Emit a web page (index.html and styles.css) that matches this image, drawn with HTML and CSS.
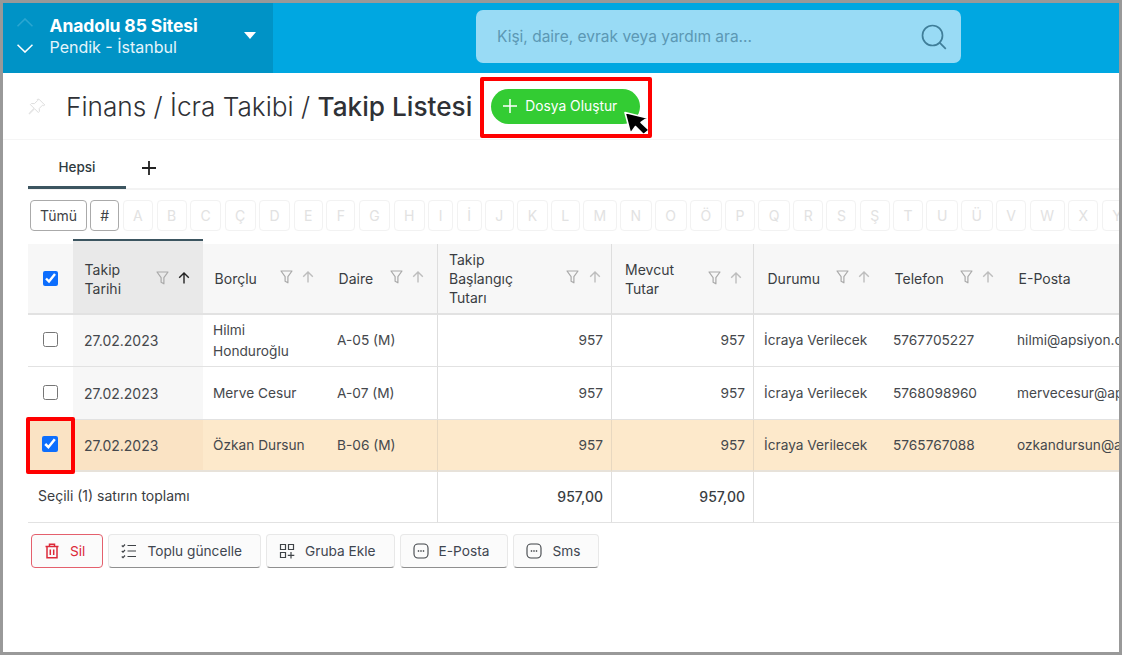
FILE: index.html
```html
<!DOCTYPE html>
<html lang="tr">
<head>
<meta charset="utf-8">
<title>Takip Listesi</title>
<link rel="stylesheet" href="styles.css">
</head>
<body>
<svg class="defs" aria-hidden="true">
  <symbol id="i-filter" viewBox="0 0 13 14"><path d="M1 1h11L7.900 6.600v6.200L5.100 11.200V6.600z" fill="none" stroke="currentColor" stroke-width="1.200" stroke-linejoin="round"/></symbol>
  <symbol id="i-arrow" viewBox="0 0 12 12"><path d="M6 11.500V1M1.200 5.800 6 1l4.800 4.800" fill="none" stroke="currentColor" stroke-width="1.400"/></symbol>
  <symbol id="i-chat" viewBox="0 0 16 16"><rect x="1" y="1" width="14" height="14" rx="4" fill="none" stroke="currentColor" stroke-width="1.100"/><path d="M4.800 8h1.400M7.300 8h1.400M9.800 8h1.400" stroke="currentColor" stroke-width="1.500"/></symbol>
</svg>
<div class="frame">
  <header class="topbar">
    <div class="site">
      <div class="site-arrows">
        <svg class="chev chev-off" viewBox="0 0 16 9"><path d="M.5 8.300L8 1l7.500 7.300" fill="none" stroke="currentColor" stroke-width="1.600"/></svg>
        <svg class="chev" viewBox="0 0 16 9"><path d="M.5.700L8 8l7.500-7.300" fill="none" stroke="currentColor" stroke-width="1.600"/></svg>
      </div>
      <div class="site-text">
        <div class="site-name">Anadolu 85 Sitesi</div>
        <div class="site-city">Pendik - İstanbul</div>
      </div>
      <span class="caret"></span>
    </div>
    <div class="search">
      <span class="search-text">Kişi, daire, evrak veya yardım ara...</span>
      <svg class="search-icon" viewBox="0 0 26 26"><circle cx="11.500" cy="11.500" r="10" fill="none" stroke="currentColor" stroke-width="1.700"/><path d="M18.600 18.600l6.200 6.200" stroke="currentColor" stroke-width="1.700"/></svg>
    </div>
  </header>

  <main class="content">
    <div class="titlebar">
      <svg class="pin" viewBox="0 0 18 18"><path d="M11 1.200l5.800 5.800-1.300.6-1-.4-3.200 3.200.1 3-1.100 1.100-3.700-3.700-4.900 4.900-.6.1.1-.6 4.900-4.900L2.400 6.600l1.100-1.100 3 .1 3.200-3.200-.4-1z" fill="none" stroke="currentColor" stroke-width="1"/></svg>
      <h1 class="title">Finans / İcra Takibi / <strong>Takip Listesi</strong></h1>
      <div class="create-wrap">
        <button class="create" type="button">
          <svg class="plus" viewBox="0 0 14 14"><path d="M7 0v14M0 7h14" stroke="currentColor" stroke-width="1.500"/></svg>
          Dosya Oluştur
        </button>
        <svg class="cursor" viewBox="0 0 28 25"><path d="M2 1.500l5.500 21 5-7 8 8 5.500-4.500-8-7.500 6.500-4.500z" fill="#000" stroke="#fff" stroke-width="1.600" stroke-linejoin="round"/></svg>
        <span class="redbox redbox-create"></span>
      </div>
    </div>

    <div class="tabs">
      <div class="tab">Hepsi</div>
      <svg class="tab-add" viewBox="0 0 14 14"><path d="M7 0v14M0 7h14" stroke="currentColor" stroke-width="1.800"/></svg>
    </div>

    <div class="letters">
      <button class="letter letter-on letter-all" type="button">Tümü</button>
      <button class="letter letter-on" type="button">#</button>
      <span class="letter">A</span><span class="letter">B</span><span class="letter">C</span><span class="letter">Ç</span><span class="letter">D</span><span class="letter">E</span><span class="letter">F</span><span class="letter">G</span><span class="letter">H</span><span class="letter">I</span><span class="letter">İ</span><span class="letter">J</span><span class="letter">K</span><span class="letter">L</span><span class="letter">M</span><span class="letter">N</span><span class="letter">O</span><span class="letter">Ö</span><span class="letter">P</span><span class="letter">Q</span><span class="letter">R</span><span class="letter">S</span><span class="letter">Ş</span><span class="letter">T</span><span class="letter">U</span><span class="letter">Ü</span><span class="letter">V</span><span class="letter">W</span><span class="letter">X</span><span class="letter">Y</span>
    </div>

    <table class="grid">
      <colgroup>
        <col class="c-check"><col class="c-date"><col class="c-name"><col class="c-flat"><col class="c-start"><col class="c-now"><col class="c-state"><col class="c-phone"><col class="c-mail">
      </colgroup>
      <thead>
        <tr>
          <th class="cell-check"><input class="check" type="checkbox" checked aria-label="Tümünü seç"></th>
          <th class="sorted"><div class="th-in"><span class="th-label">Takip<br>Tarihi</span><span class="th-icons"><svg class="ic-filter"><use href="#i-filter"/></svg><svg class="ic-arrow ic-arrow-on"><use href="#i-arrow"/></svg></span></div></th>
          <th><div class="th-in"><span class="th-label">Borçlu</span><span class="th-icons"><svg class="ic-filter"><use href="#i-filter"/></svg><svg class="ic-arrow"><use href="#i-arrow"/></svg></span></div></th>
          <th><div class="th-in"><span class="th-label">Daire</span><span class="th-icons"><svg class="ic-filter"><use href="#i-filter"/></svg><svg class="ic-arrow"><use href="#i-arrow"/></svg></span></div></th>
          <th class="sep"><div class="th-in th-start"><span class="th-label">Takip<br>Başlangıç<br>Tutarı</span><span class="th-icons"><svg class="ic-filter"><use href="#i-filter"/></svg><svg class="ic-arrow"><use href="#i-arrow"/></svg></span></div></th>
          <th class="sep"><div class="th-in th-now"><span class="th-label">Mevcut<br>Tutar</span><span class="th-icons"><svg class="ic-filter"><use href="#i-filter"/></svg><svg class="ic-arrow"><use href="#i-arrow"/></svg></span></div></th>
          <th class="sep"><div class="th-in th-wide"><span class="th-label">Durumu</span><span class="th-icons"><svg class="ic-filter"><use href="#i-filter"/></svg><svg class="ic-arrow"><use href="#i-arrow"/></svg></span></div></th>
          <th><div class="th-in"><span class="th-label">Telefon</span><span class="th-icons"><svg class="ic-filter"><use href="#i-filter"/></svg><svg class="ic-arrow"><use href="#i-arrow"/></svg></span></div></th>
          <th><div class="th-in"><span class="th-label">E-Posta</span></div></th>
        </tr>
      </thead>
      <tbody>
        <tr class="row">
          <td class="cell-check"><input class="check" type="checkbox" aria-label="Seç"></td>
          <td class="date">27.02.2023</td><td>Hilmi Honduroğlu</td><td>A-05 (M)</td><td class="sep num">957</td><td class="sep num">957</td><td class="sep">İcraya Verilecek</td><td>5767705227</td><td class="mail">hilmi@apsiyon.com</td>
        </tr>
        <tr class="row row-tall">
          <td class="cell-check"><input class="check" type="checkbox" aria-label="Seç"></td>
          <td class="date">27.02.2023</td><td>Merve Cesur</td><td>A-07 (M)</td><td class="sep num">957</td><td class="sep num">957</td><td class="sep">İcraya Verilecek</td><td>5768098960</td><td class="mail">mervecesur@apsiyon.com</td>
        </tr>
        <tr class="row row-on">
          <td class="cell-check cell-mark"><input class="check" type="checkbox" checked aria-label="Seç"><span class="redbox redbox-check"></span></td>
          <td class="date">27.02.2023</td><td>Özkan Dursun</td><td>B-06 (M)</td><td class="sep num">957</td><td class="sep num">957</td><td class="sep">İcraya Verilecek</td><td>5765767088</td><td class="mail">ozkandursun@apsiyon.com</td>
        </tr>
      </tbody>
      <tfoot>
        <tr>
          <td colspan="4" class="sum-label">Seçili (1) satırın toplamı</td>
          <td class="sep num sum">957,00</td><td class="sep num sum">957,00</td><td colspan="3" class="sep"></td>
        </tr>
      </tfoot>
    </table>

    <div class="actions">
      <button class="act act-del" type="button">
        <svg class="act-ic" viewBox="0 0 16 16"><path d="M1.500 3.500h13M5.500 3.300V1.300h5v2M3 3.500v11.200h10V3.500M6.300 6.500v5.500M9.700 6.500v5.500" fill="none" stroke="currentColor" stroke-width="1.500"/></svg>
        Sil
      </button>
      <button class="act" type="button">
        <svg class="act-ic" viewBox="0 0 16 16"><path d="M6.500 2.500H15M6.500 8H15M6.500 13.500H15M.8 2.500l1.200 1.200L4 1.500M.8 8l1.200 1.200L4 7M.8 13.500l1.200 1.200L4 12.500" fill="none" stroke="currentColor" stroke-width="1.200"/></svg>
        Toplu güncelle
      </button>
      <button class="act" type="button">
        <svg class="act-ic" viewBox="0 0 16 16"><path d="M1.500 1.500h5v5h-5zM9.500 1.500h5v5h-5zM1.500 9.500h5v5h-5zM12 9v6.500M8.800 12.300h6.500" fill="none" stroke="currentColor" stroke-width="1.200"/></svg>
        Gruba Ekle
      </button>
      <button class="act" type="button"><svg class="act-ic"><use href="#i-chat"/></svg>E-Posta</button>
      <button class="act" type="button"><svg class="act-ic"><use href="#i-chat"/></svg>Sms</button>
    </div>
  </main>
</div>
</body>
</html>
```

FILE: styles.css
```css
* { box-sizing: border-box; }
html, body { margin: 0; height: 100%; }
body {
  font-family: Inter, "Liberation Sans", sans-serif;
  font-size: 14px;
  color: #3f4347;
  background: #fff;
  overflow: hidden;
}
button { font-family: inherit; }
.defs { display: none; }

.frame {
  width: 1122px;
  height: 655px;
  border: 3px solid #999;
  display: flex;
  flex-direction: column;
  overflow: hidden;
}

/* top bar */
.topbar {
  height: 70px;
  flex: none;
  background: #00a7e1;
  display: flex;
  align-items: stretch;
}
.site {
  width: 270px;
  background: #0093c6;
  color: #fff;
  display: flex;
  align-items: center;
  padding-left: 14px;
}
.site-arrows {
  width: 32.5px;
  display: flex;
  flex-direction: column;
  gap: 17px;
  margin-top: -6px;
}
.chev { width: 16px; height: 9px; display: block; color: #fff; }
.chev-off { color: #2ba6d1; }
.site-text { flex: 1; margin-top: -4px; }
.site-name { font-size: 17.5px; font-weight: 700; line-height: 22px; letter-spacing: -0.1px; }
.site-city { font-size: 16px; font-weight: 400; line-height: 20px; color: #e5f5fb; }
.caret {
  width: 0;
  height: 0;
  border-left: 6.5px solid transparent;
  border-right: 6.5px solid transparent;
  border-top: 7px solid #fff;
  margin: 0 17.5px 6px 0;
}
.search {
  width: 485px;
  height: 53px;
  margin: 7px 0 0 203px;
  background: #99dbf5;
  border-radius: 7px;
  display: flex;
  align-items: center;
  justify-content: space-between;
  padding: 0 14px 0 21px;
}
.search-text { font-size: 15.5px; color: #5c98b4; }
.search-icon { width: 26px; height: 26px; color: #3f7e99; }

/* content */
.content { flex: 1; min-height: 0; overflow: hidden; }
.titlebar {
  height: 67px;
  padding-left: 25px;
  border-bottom: 1px solid #f5f5f5;
  display: flex;
  align-items: center;
}
.pin { width: 18px; height: 18px; margin-top: 2px; color: #dedede; flex: none; }
.title {
  margin: 2px 0 0 20px;
  font-size: 26.2px;
  font-weight: 300;
  line-height: 32px;
  color: #2f3136;
  white-space: nowrap;
}
.title strong { font-weight: 500; }
.create-wrap { position: relative; margin-left: 19px; }
.create {
  width: 149px;
  height: 35px;
  border: 0;
  border-radius: 18px;
  background: #33cc33;
  color: #fff;
  font-size: 13.8px;
  font-weight: 400;
  display: flex;
  align-items: center;
  padding: 0 0 0 12px;
  gap: 8px;
}
.plus { width: 14px; height: 14px; flex: none; }
.cursor { position: absolute; left: 132px; top: 22px; width: 28px; height: 25px; }
.redbox { position: absolute; border: 4px solid #f00; border-radius: 2px; pointer-events: none; }
.redbox-create { left: -11px; top: -12px; width: 172px; height: 61px; }

.tabs {
  height: 50px;
  margin-left: 25px;
  border-bottom: 2px solid #f3f3f3;
  display: flex;
  align-items: stretch;
}
.tab {
  width: 98px;
  height: 49px;
  padding-top: 18px;
  text-align: center;
  font-size: 13.5px;
  font-weight: 500;
  line-height: 18px;
  color: #2f3a40;
  border-bottom: 3px solid #3c5560;
}
.tab-add { width: 14px; height: 14px; margin: 21px 0 0 16px; color: #222; }

.letters {
  margin: 10px 0 0 27px;
  height: 31px;
  display: flex;
  gap: 3.3px;
  white-space: nowrap;
}
.letter {
  height: 31px;
  min-width: 25px;
  flex: none;
  padding: 0 9.5px;
  border: 1px solid #f2f2f2;
  border-radius: 4px;
  background: #fff;
  font-size: 14px;
  line-height: 29px;
  color: #e2e2e2;
  text-align: center;
}
.letter-on { border-color: #aaa; color: #3f4347; padding: 0; width: 29px; line-height: 1; }
.letter-all { width: 57px; }

/* table */
.grid {
  margin: 13px 0 0 25px;
  width: 1100px;
  table-layout: fixed;
  border-collapse: separate;
  border-spacing: 0;
}
.c-check { width: 45px; }
.c-date { width: 130px; }
.c-name { width: 124px; }
.c-flat { width: 110px; }
.c-start { width: 174px; }
.c-now { width: 142px; }
.c-state { width: 130px; }
.c-phone { width: 124px; }
.c-mail { width: 121px; }

.grid th {
  height: 71px;
  padding: 0;
  background: #f7f7f7;
  border-bottom: 2px solid #e2e2e2;
  font-size: 14px;
  font-weight: 400;
  line-height: 18.7px;
  text-align: left;
  color: #3a3d42;
  vertical-align: middle;
}
.grid th.sorted { background: #e9e9e9; position: relative; }
.grid th.sorted::before {
  content: "";
  position: absolute;
  left: 0;
  right: 0;
  top: -5px;
  height: 5px;
  background: linear-gradient(#3c5560 0 2px, #e9e9e9 2px);
}
.th-in {
  display: flex;
  align-items: center;
  justify-content: space-between;
  padding: 2px 13px 0 11.6px;
}
.th-wide { padding-left: 13.5px; }
.th-start { padding-left: 11px; padding-right: 10.500px; }
.th-now { padding-left: 13px; padding-right: 11px; }
.th-icons { display: flex; align-items: center; gap: 9.500px; margin-top: -4px; flex: none; }
.ic-filter { width: 13px; height: 14px; color: #a9a9a9; }
.ic-arrow { width: 12px; height: 12px; color: #bdbdbd; }
.ic-arrow-on { color: #222; }
.check { width: 15px; height: 15px; margin: 0; display: block; accent-color: #0d6efd; }
.cell-check .check { margin: 0 auto 0 15px; }
.grid td.cell-check .check { margin-top: -2px; }
.grid td.cell-mark .check { width: 16px; height: 16px; margin-left: 14px; }

.grid td {
  padding: 0 8px 0 10px;
  border-bottom: 1px solid #e2e2e2;
  font-size: 13.7px;
  line-height: 21px;
  color: #45484c;
  background: #fff;
  vertical-align: middle;
}
.row { height: 52px; }
.row-tall { height: 53px; }
.grid .date { background: #f7f7f7; padding-left: 11px; font-size: 14px; }
.grid td.cell-check { padding: 0; }
.row-on { height: 52px; }
.grid .row-on td { background: #fde9cb; border-bottom: 2px solid #e7e2da; }
.grid .row-on .date, .grid .row-on .cell-check { background: #fae3c4; }
.cell-mark { position: relative; }
.redbox-check { left: -2px; top: -3px; width: 49px; height: 57px; }
.sep { border-left: 1px solid #dedede; }
.grid td.sep { border-left: 1px solid #dedede; }
.grid .row-on td.sep { border-left-color: #e8d8c0; }
.num { text-align: right; }
.mail { white-space: nowrap; overflow: hidden; }
.grid tfoot td { height: 51px; padding-bottom: 1px; vertical-align: top; padding-top: 14px; }
.grid .sum-label { padding-left: 10px; padding-top: 13px; font-size: 14px; color: #3a3d42; }
.grid .sum { font-weight: 500; color: #3a3d42; font-size: 14px; }

/* actions */
.actions { margin: 11px 0 0 28px; display: flex; gap: 5px; }
.act {
  height: 34px;
  display: flex;
  align-items: center;
  gap: 10px;
  padding: 0 18px 0 12px;
  background: #fbfbfb;
  border: 1px solid #e8e8e8;
  border-bottom-color: #8f8f8f;
  border-radius: 4px;
  font-size: 13.7px;
  color: #3f4650;
}
.act-ic { width: 16px; height: 16px; flex: none; color: #3f4347; }
.act-del {
  border-color: #e4606d;
  color: #dc2a3a;
  padding-right: 17px;
}
.act-del .act-ic { color: #dc2a3a; }
```
